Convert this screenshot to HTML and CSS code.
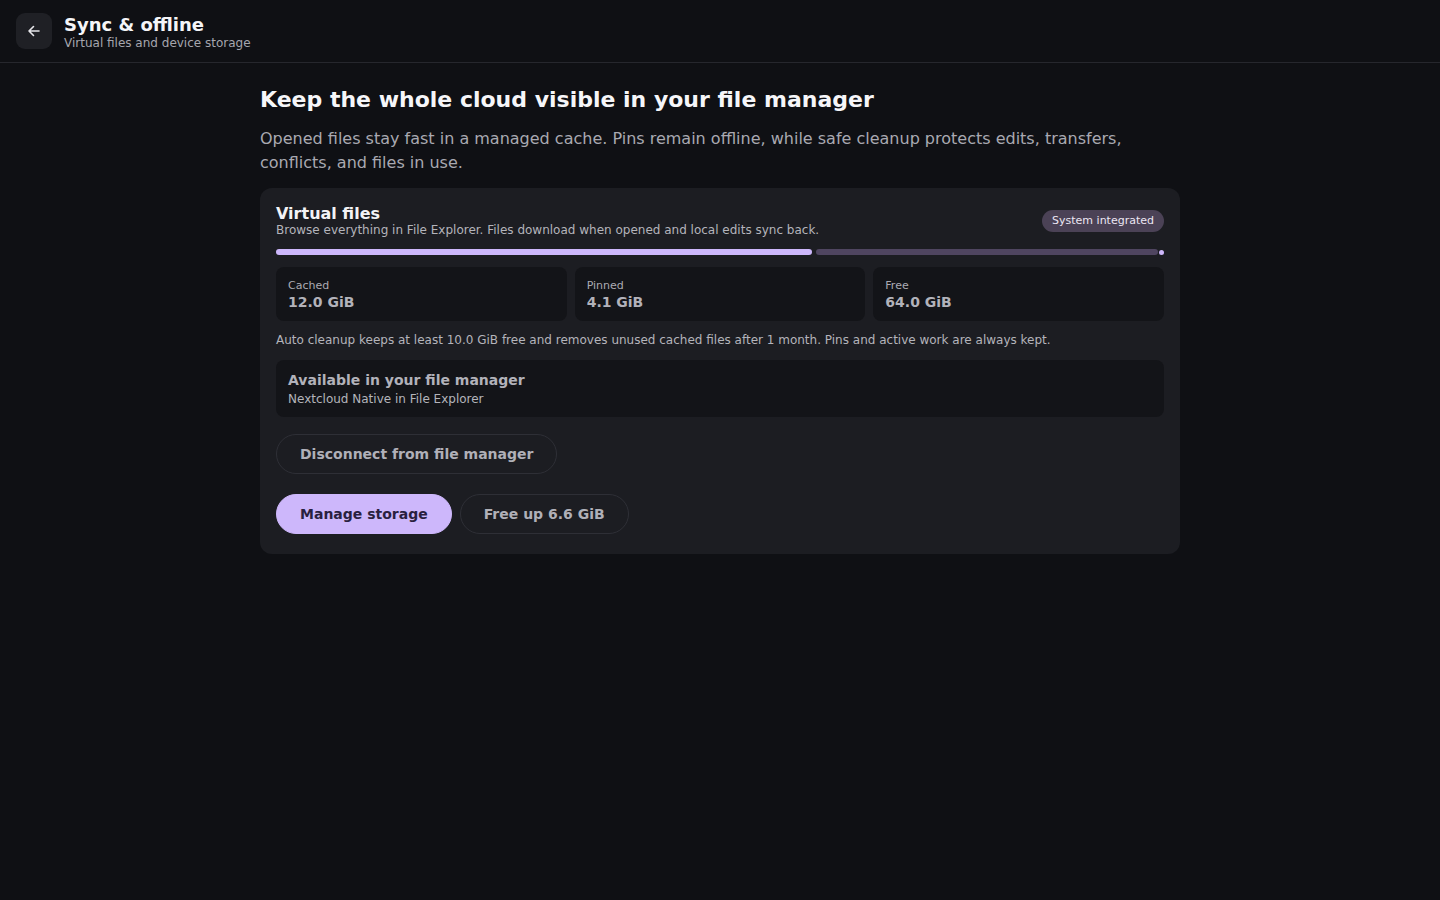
FILE: index.html
```html
<!DOCTYPE html>
<html lang="en">
<head>
<meta charset="utf-8">
<title>Sync &amp; offline</title>
<link rel="stylesheet" href="styles.css">
</head>
<body>
<header class="topbar">
  <button class="back" aria-label="Back">
    <svg width="16" height="16" viewBox="0 0 16 16" fill="none" stroke="#e6e6ea" stroke-width="1.6" stroke-linecap="round" stroke-linejoin="round"><path d="M13 8H3M7.5 3.5L3 8l4.5 4.5"/></svg>
  </button>
  <div class="titles">
    <div class="title">Sync &amp; offline</div>
    <div class="subtitle">Virtual files and device storage</div>
  </div>
</header>
<main class="main">
  <h1 class="heading">Keep the whole cloud visible in your file manager</h1>
  <p class="lead">Opened files stay fast in a managed cache. Pins remain offline, while safe cleanup protects edits, transfers, conflicts, and files in use.</p>
  <section class="card">
    <div class="card-head">
      <div>
        <div class="card-title">Virtual files</div>
        <div class="card-desc">Browse everything in File Explorer. Files download when opened and local edits sync back.</div>
      </div>
      <span class="badge">System integrated</span>
    </div>
    <div class="bar">
      <span class="seg seg-cached" style="flex-grow:536"></span>
      <span class="seg seg-pinned" style="flex-grow:342"></span>
      <span class="seg seg-free"></span>
    </div>
    <div class="stats">
      <div class="stat"><div class="stat-label">Cached</div><div class="stat-value">12.0 GiB</div></div>
      <div class="stat"><div class="stat-label">Pinned</div><div class="stat-value">4.1 GiB</div></div>
      <div class="stat"><div class="stat-label">Free</div><div class="stat-value">64.0 GiB</div></div>
    </div>
    <p class="note">Auto cleanup keeps at least 10.0 GiB free and removes unused cached files after 1 month. Pins and active work are always kept.</p>
    <div class="info">
      <div class="info-title">Available in your file manager</div>
      <div class="info-sub">Nextcloud Native in File Explorer</div>
    </div>
    <div class="row row-first">
      <button class="btn btn-outline">Disconnect from file manager</button>
    </div>
    <div class="row row-second">
      <button class="btn btn-primary">Manage storage</button>
      <button class="btn btn-outline">Free up 6.6 GiB</button>
    </div>
  </section>
</main>
</body>
</html>
```
FILE: styles.css
```css
* { box-sizing: border-box; }
html, body { margin: 0; padding: 0; }
body {
  background: #0f1014;
  color: #f2f2f5;
  font-family: "DejaVu Sans", "Liberation Sans", sans-serif;
  min-height: 900px;
}
.topbar {
  height: 63px;
  display: flex;
  align-items: center;
  gap: 12px;
  padding: 0 16px;
  border-bottom: 1px solid #26272d;
}
.back {
  width: 36px;
  height: 36px;
  border: none;
  border-radius: 9px;
  background: #1f2025;
  display: flex;
  align-items: center;
  justify-content: center;
  padding: 0;
}
.titles { display: flex; flex-direction: column; margin-top: 1px; }
.title { font-size: 18px; font-weight: bold; line-height: 22px; color: #f5f5f8; }
.subtitle { font-size: 12px; line-height: 14px; color: #a6a6ae; }
.main {
  width: 920px;
  margin: 0 auto;
  padding-top: 23px;
}
.heading {
  margin: 0;
  font-size: 22px;
  line-height: 28px;
  font-weight: bold;
  color: #f6f6f9;
}
.lead {
  margin: 13px 0 13px;
  font-size: 16px;
  line-height: 24px;
  color: #a9a9b1;
}
.card {
  background: #1c1d22;
  border-radius: 12px;
  padding: 16px 16px 20px;
}
.card-head {
  display: flex;
  justify-content: space-between;
  align-items: center;
}
.card-title { font-size: 16px; font-weight: bold; line-height: 19px; color: #f3f3f6; }
.card-desc { font-size: 12px; line-height: 15px; color: #b4b4bb; }
.badge {
  background: #4b4256;
  color: #ece6f3;
  font-size: 11px;
  line-height: 22px;
  padding: 0 10px;
  border-radius: 11px;
}
.bar {
  display: flex;
  gap: 4px;
  height: 6px;
  margin-top: 11px;
}
.seg { display: block; height: 6px; border-radius: 3px; flex-basis: 0; }
.seg-cached { background: #cdb7fb; }
.seg-pinned { background: #4f4560; }
.seg-free { background: #cdb7fb; flex: 0 0 5px; height: 5px; margin-top: 0.5px; margin-left: -3px; }
.stats {
  display: grid;
  grid-template-columns: repeat(3, 1fr);
  gap: 8px;
  margin-top: 12px;
}
.stat {
  background: #131418;
  border-radius: 8px;
  padding: 12px 12px 10px;
  height: 54px;
}
.stat-label { font-size: 11px; line-height: 14px; color: #ababb3; }
.stat-value { font-size: 14px; line-height: 18px; font-weight: bold; color: #b2b2ba; }
.note {
  margin: 12px 0 12px;
  font-size: 12px;
  line-height: 15px;
  color: #b4b4bb;
}
.info {
  background: #131418;
  border-radius: 8px;
  padding: 11px 12px 10px;
  height: 57px;
}
.info-title { font-size: 14px; line-height: 18px; font-weight: bold; color: #b2b2ba; }
.info-sub { font-size: 12px; line-height: 16px; color: #b4b4bb; margin-top: 2px; }
.row { display: flex; gap: 8px; }
.row-first { margin-top: 17px; }
.row-second { margin-top: 20px; }
.btn {
  height: 40px;
  border-radius: 20px;
  padding: 0 23px;
  font-family: "DejaVu Sans", "Liberation Sans", sans-serif;
  font-size: 14px;
  font-weight: bold;
  cursor: pointer;
}
.btn-outline {
  background: transparent;
  border: 1px solid #2e2f36;
  color: #b0b0b8;
}
.btn-primary {
  background: #cdb7fb;
  border: 1px solid #cdb7fb;
  color: #2a1f40;
}
```
